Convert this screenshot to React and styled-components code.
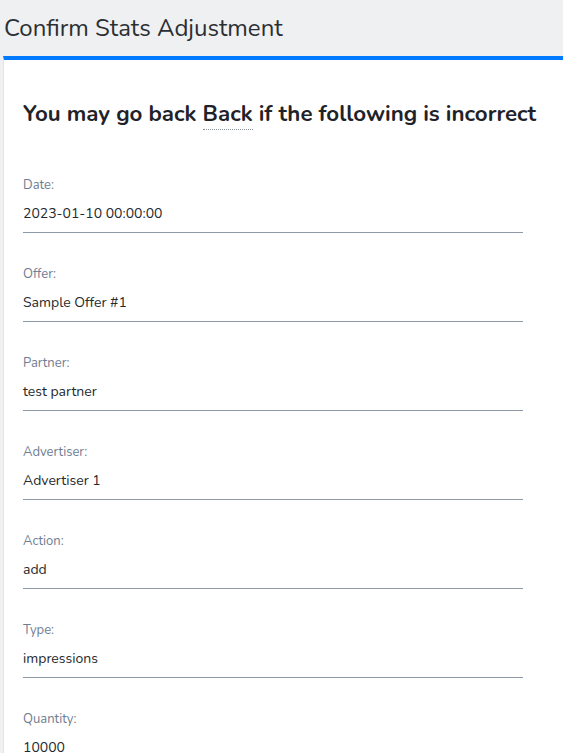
import React from "react";
import styled, { createGlobalStyle } from "styled-components";

const fields = [
  { label: "Date:", value: "2023-01-10 00:00:00" },
  { label: "Offer:", value: "Sample Offer #1" },
  { label: "Partner:", value: "test partner" },
  { label: "Advertiser:", value: "Advertiser 1" },
  { label: "Action:", value: "add" },
  { label: "Type:", value: "impressions" },
  { label: "Quantity:", value: "10000" },
];

const GlobalStyle = createGlobalStyle`
  html, body {
    margin: 0;
    padding: 0;
    background: #eff0f2;
    font-family: "Nunito", "Lato", "Open Sans", sans-serif;
    color: #212529;
  }
`;

const App = () => {
  return (
    <>
      <GlobalStyle />
      <Page>
        <PageTitle>Confirm Stats Adjustment</PageTitle>
        <Card>
          <Heading>
            You may go back <Abbr title="Back">Back</Abbr> if the following is
            incorrect
          </Heading>
          <FieldList>
            {fields.map((f, i) => (
              <Field key={i}>
                <Label>{f.label}</Label>
                <Value>{f.value}</Value>
              </Field>
            ))}
          </FieldList>
        </Card>
      </Page>
    </>
  );
};

export default App;

const Page = styled.div`
  height: 100vh;
  overflow: hidden;
`;

const PageTitle = styled.h1`
  margin: 0;
  padding: 13px 0 0 4px;
  height: 56px;
  box-sizing: border-box;
  font-size: 24px;
  font-weight: 400;
  line-height: 30px;
  color: #2b2f33;
`;

const Card = styled.div`
  margin-left: 3px;
  background: #fff;
  border-top: 4px solid #007bff;
  border-left: 1px solid #e1e4e8;
  padding: 41px 0 40px 19px;
  min-height: 800px;
`;

const Heading = styled.h2`
  margin: 0;
  font-size: 22.3px;
  font-weight: 700;
  line-height: 26px;
  color: #1f2329;
`;

const Abbr = styled.abbr`
  text-decoration: none;
  border-bottom: 1px dotted #8a8f96;
  cursor: help;
`;

const FieldList = styled.div`
  margin-top: 49px;
  width: 500px;
  display: flex;
  flex-direction: column;
  gap: 32px;
`;

const Field = styled.div`
  display: flex;
  flex-direction: column;
`;

const Label = styled.span`
  font-size: 13px;
  line-height: 18px;
  font-weight: 400;
  color: #6f7d92;
  margin-bottom: 10px;
`;

const Value = styled.div`
  font-size: 14px;
  line-height: 20px;
  color: #25292e;
  padding-bottom: 8px;
  border-bottom: 1px solid #8d99a6;
`;
